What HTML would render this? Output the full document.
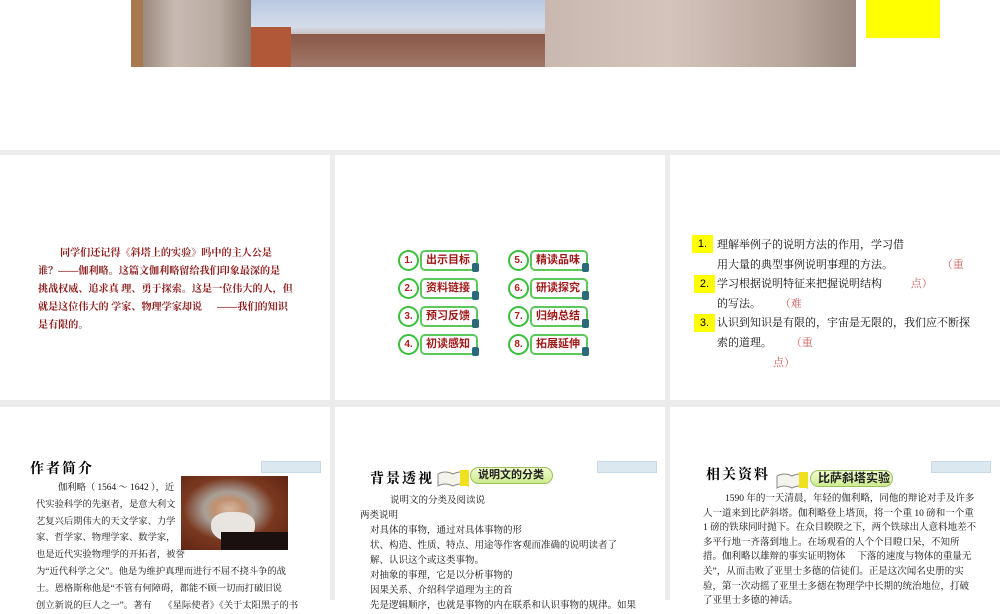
<!DOCTYPE html>
<html><head><meta charset="utf-8"><style>
*{margin:0;padding:0;box-sizing:border-box}
body{width:1000px;height:600px;position:relative;overflow:hidden;background:#fff;font-family:"Liberation Sans","Noto Sans CJK SC",sans-serif}
.abs{position:absolute}
.s{position:absolute;background:#fff}
.t{position:absolute;white-space:nowrap;font-family:"Liberation Serif","Noto Serif CJK SC",serif}
.btn{position:absolute;height:21px}
.btn .c{position:absolute;left:0;top:0;width:21px;height:21px;border-radius:50%;border:2px solid #3cbf3c;background:#fff;font-size:10px;color:#b02020;font-weight:bold;text-align:center;line-height:17px}
.btn .l{position:absolute;left:22px;top:0;width:58px;height:21px;border:2px solid #5cc85c;border-radius:5px;background:#fff;font-size:11px;color:#a01818;font-weight:bold;line-height:17px;padding-left:4px}
.btn .l:after{content:"";position:absolute;right:-3px;bottom:-3px;width:7px;height:9px;background:#2a6a7a;border-radius:2px}
.yb{position:absolute;width:21px;height:18px;background:#ff0;font-size:11px;text-align:center;line-height:18px}
.bl{position:absolute;width:60px;height:12px;background:#dbe8f0;border:1px solid #c8d8e4}
.pill{position:absolute;height:17px;border-radius:9px;background:linear-gradient(#f2fcd0,#cdeb90);border:1px solid #9cc060;font-size:11px;font-weight:bold;color:#222;line-height:15px;padding-left:7px}
.book{position:absolute;width:34px;height:20px}
</style></head><body>
<div class="abs" style="left:0;top:150px;width:1000px;height:450px;background:#ececec"></div>
<div class="abs" style="left:131px;top:0;width:725px;height:67px;background:linear-gradient(180deg,#b8c8e0,#d4dcea 40%,#c0a8a0 60%,#8a6658);overflow:hidden">
 <div class="abs" style="left:0;top:0;width:40px;height:67px;background:#a87850"></div>
 <div class="abs" style="left:12px;top:0;width:108px;height:67px;background:linear-gradient(90deg,#9a8a80,#c8bab2 30%,#b8aaa0 70%,#8a7a70)"></div>
 <div class="abs" style="left:120px;top:27px;width:40px;height:40px;background:#b05838"></div>
 <div class="abs" style="left:160px;top:34px;width:254px;height:33px;background:linear-gradient(#8a5848,#a07868)"></div>
 <div class="abs" style="left:414px;top:0;width:311px;height:67px;background:linear-gradient(90deg,#c8b8b0,#d4c4bc 40%,#b8a69c 80%,#9a8880)"></div>
</div>
<div class="abs" style="left:866px;top:0;width:74px;height:38px;background:#ff0"></div>
<div class="s" style="left:0;top:155px;width:330px;height:245px"></div>
<div class="s" style="left:335px;top:155px;width:330px;height:245px"></div>
<div class="s" style="left:670px;top:155px;width:330px;height:245px"></div>
<div class="s" style="left:0;top:407px;width:330px;height:193px"></div>
<div class="s" style="left:335px;top:407px;width:330px;height:193px"></div>
<div class="s" style="left:670px;top:407px;width:330px;height:193px"></div>

<div class="abs" style="left:38px;top:245px;white-space:nowrap;font-size:10.1px;line-height:18px;color:#8b1a1a;font-weight:bold;font-family:'Liberation Serif','Noto Serif CJK SC',serif">
<div style="padding-left:22px">同学们还记得《斜塔上的实验》吗中的主人公是</div>
<div>谁？——伽利略。这篇文伽利略留给我们印象最深的是</div>
<div>挑战权威、追求真 理、勇于探索。这是一位伟大的人，但</div>
<div>就是这位伟大的 学家、物理学家却说 &nbsp;&nbsp;&nbsp;&nbsp;&nbsp;——我们的知识</div>
<div>是有限的。</div>
</div>

<div class="btn" style="left:398px;top:250px"><div class="c">1.</div><div class="l">出示目标</div></div>
<div class="btn" style="left:398px;top:278px"><div class="c">2.</div><div class="l">资料链接</div></div>
<div class="btn" style="left:398px;top:306px"><div class="c">3.</div><div class="l">预习反馈</div></div>
<div class="btn" style="left:398px;top:334px"><div class="c">4.</div><div class="l">初读感知</div></div>
<div class="btn" style="left:508px;top:250px"><div class="c">5.</div><div class="l">精读品味</div></div>
<div class="btn" style="left:508px;top:278px"><div class="c">6.</div><div class="l">研读探究</div></div>
<div class="btn" style="left:508px;top:306px"><div class="c">7.</div><div class="l">归纳总结</div></div>
<div class="btn" style="left:508px;top:334px"><div class="c">8.</div><div class="l">拓展延伸</div></div>

<div class="yb" style="left:692px;top:235px">1.</div>
<div class="yb" style="left:694px;top:275px">2.</div>
<div class="yb" style="left:694px;top:314px">3.</div>
<div class="t" style="left:717px;top:236px;font-size:11px;line-height:19.6px;color:#111">
<div>理解举例子的说明方法的作用，学习借</div>
<div>用大量的典型事例说明事理的方法。 <span style="color:#d06060;margin-left:46px">（重</span></div>
<div>学习根据说明特征来把握说明结构 <span style="color:#d06060;margin-left:26px">点）</span></div>
<div>的写法。 <span style="color:#d06060;margin-left:16px">（难</span></div>
<div>认识到知识是有限的，宇宙是无限的，我们应不断探</div>
<div>索的道理。 <span style="color:#d06060;margin-left:16px">（重</span></div>
<div><span style="color:#d06060;margin-left:56px">点）</span></div>
</div>

<div class="t" style="left:30px;top:458px;font-size:14px;font-weight:bold;letter-spacing:2px">作者简介</div>
<div class="bl" style="left:261px;top:461px"></div>
<div class="abs" style="left:181px;top:476px;width:107px;height:74px;background:radial-gradient(ellipse at 45% 45%,#d8b8a0 0,#c09070 18%,#a8a098 30%,#7a3820 55%,#5a2010 100%)">
 <div class="abs" style="left:30px;top:36px;width:44px;height:30px;border-radius:40% 40% 50% 50%;background:#e8e4e0"></div>
 <div class="abs" style="left:40px;top:56px;width:67px;height:18px;background:#1a1010"></div>
</div>
<div class="t" style="left:36px;top:480px;font-size:9.3px;line-height:16.8px;color:#111">
<div style="padding-left:22px">伽利略（ 1564 ～ 1642 ），近</div>
<div>代实验科学的先驱者，是意大利文</div>
<div>艺复兴后期伟大的天文学家、力学</div>
<div>家、哲学家、物理学家、数学家，</div>
<div>也是近代实验物理学的开拓者，被誉</div>
<div>为“近代科学之父”。他是为维护真理而进行不屈不挠斗争的战</div>
<div>士。恩格斯称他是“不管有何障碍，都能不顾一切而打破旧说</div>
<div>创立新说的巨人之一”。著有 &nbsp;&nbsp;&nbsp;&nbsp;《星际使者》《关于太阳黑子的书</div>
</div>

<div class="t" style="left:370px;top:468px;font-size:14px;font-weight:bold;letter-spacing:2px">背景透视</div>
<svg class="book" style="left:436px;top:468px" viewBox="0 0 34 20"><path d="M2 6 Q9 2 17 6 Q25 2 32 6 L32 18 Q25 14 17 18 Q9 14 2 18Z" fill="#f4f4ec" stroke="#888"/><rect x="24" y="2" width="9" height="16" fill="#f0e020"/></svg>
<div class="pill" style="left:470px;top:467px;width:83px">说明文的分类</div>
<div class="bl" style="left:597px;top:461px"></div>
<div class="t" style="left:360px;top:494px;font-size:9.5px;line-height:15px;color:#111">
<div style="padding-left:30px">说明文的分类及阅读说</div>
<div>两类说明</div>
<div style="padding-left:10px">对具体的事物，通过对具体事物的形</div>
<div style="padding-left:10px">状、构造、性质、特点、用途等作客观而准确的说明读者了</div>
<div style="padding-left:10px">解、认识这个或这类事物。</div>
<div style="padding-left:10px">对抽象的事理，它是以分析事物的</div>
<div style="padding-left:10px">因果关系、介绍科学道理为主的首</div>
<div style="padding-left:10px">先是逻辑顺序，也就是事物的内在联系和认识事物的规律。如果</div>
</div>

<div class="t" style="left:706px;top:464px;font-size:14px;font-weight:bold;letter-spacing:2px">相关资料</div>
<svg class="book" style="left:775px;top:470px" viewBox="0 0 34 20"><path d="M2 6 Q9 2 17 6 Q25 2 32 6 L32 18 Q25 14 17 18 Q9 14 2 18Z" fill="#f4f4ec" stroke="#888"/><rect x="24" y="2" width="9" height="16" fill="#f0e020"/></svg>
<div class="pill" style="left:810px;top:470px;width:83px;font-size:12px">比萨斜塔实验</div>
<div class="bl" style="left:931px;top:461px"></div>
<div class="t" style="left:703px;top:492px;font-size:9.5px;line-height:14.6px;color:#111">
<div style="padding-left:22px">1590 年的一天清晨，年轻的伽利略，同他的辩论对手及许多</div>
<div>人一道来到比萨斜塔。伽利略登上塔顶，将一个重 10 磅和一个重</div>
<div>1 磅的铁球同时抛下。在众目睽睽之下，两个铁球出人意料地差不</div>
<div>多平行地一齐落到地上。在场观看的人个个目瞪口呆，不知所</div>
<div>措。伽利略以雄辩的事实证明物体 &nbsp;&nbsp;&nbsp;&nbsp;下落的速度与物体的重量无</div>
<div>关”，从而击败了亚里士多德的信徒们。正是这次闻名史册的实</div>
<div>验，第一次动摇了亚里士多德在物理学中长期的统治地位，打破</div>
<div>了亚里士多德的神话。</div>
</div>
</body></html>
